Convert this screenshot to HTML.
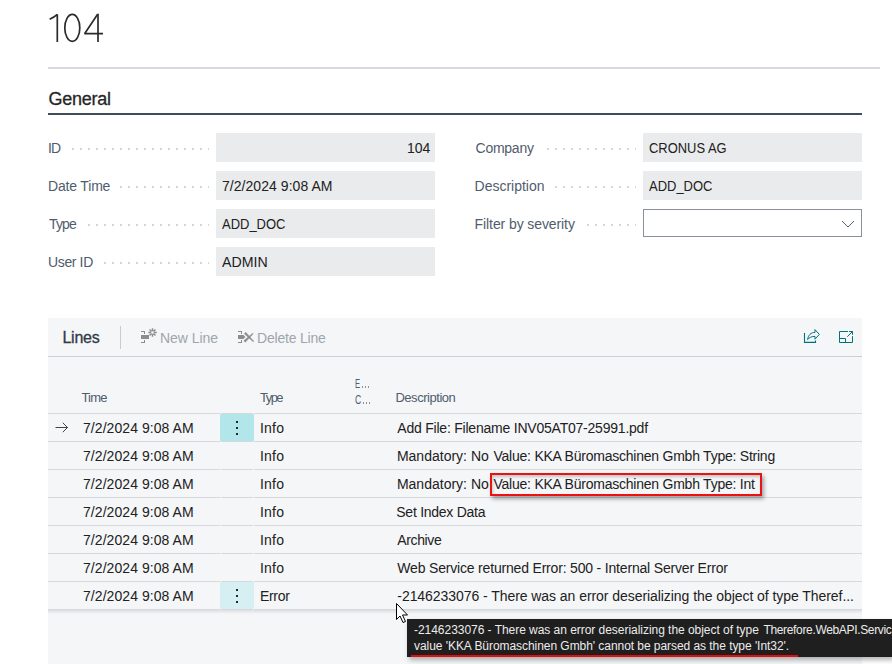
<!DOCTYPE html><html><head><meta charset="utf-8"><style>
html,body{margin:0;padding:0}
body{width:892px;height:664px;overflow:hidden;position:relative;background:#fff;font-family:"Liberation Sans",sans-serif}
.t{position:absolute;white-space:nowrap}
.r{position:absolute}
</style></head><body>
<svg class="r" style="left:0;top:0" width="120" height="60" viewBox="0 0 120 60">
<g fill="none" stroke="#2b2b2b" stroke-width="1.7" stroke-linejoin="miter">
<path d="M57.3 14.2 V42 M57.3 14.4 Q54 17.5 49.6 19.3"/>
<ellipse cx="72.3" cy="27.9" rx="7.5" ry="13.5"/>
<path d="M98 42 V13.8" /><path d="M97.6 14.3 L84.6 33.7 H103" stroke-linejoin="bevel"/>
</g></svg>
<div class="r" style="left:48px;top:67px;width:832px;height:2px;background:#d6d9dd"></div>
<div class="t" style="left:48.60px;top:89.00px;font-size:18px;line-height:20px;color:#262626;font-weight:400;letter-spacing:-0.267px;-webkit-text-stroke:0.3px #262626;">General</div>
<div class="r" style="left:48px;top:113px;width:814px;height:2px;background:#3e4c5e"></div>
<div class="t" style="left:48.00px;top:140.00px;font-size:14px;line-height:16px;color:#505c6d;font-weight:400;letter-spacing:-0.900px;">ID</div>
<div class="r" style="left:72px;top:148px;width:2px;height:2px;background:#d3d6da"></div>
<div class="r" style="left:80px;top:148px;width:2px;height:2px;background:#d3d6da"></div>
<div class="r" style="left:88px;top:148px;width:2px;height:2px;background:#d3d6da"></div>
<div class="r" style="left:96px;top:148px;width:2px;height:2px;background:#d3d6da"></div>
<div class="r" style="left:104px;top:148px;width:2px;height:2px;background:#d3d6da"></div>
<div class="r" style="left:112px;top:148px;width:2px;height:2px;background:#d3d6da"></div>
<div class="r" style="left:120px;top:148px;width:2px;height:2px;background:#d3d6da"></div>
<div class="r" style="left:128px;top:148px;width:2px;height:2px;background:#d3d6da"></div>
<div class="r" style="left:136px;top:148px;width:2px;height:2px;background:#d3d6da"></div>
<div class="r" style="left:144px;top:148px;width:2px;height:2px;background:#d3d6da"></div>
<div class="r" style="left:152px;top:148px;width:2px;height:2px;background:#d3d6da"></div>
<div class="r" style="left:160px;top:148px;width:2px;height:2px;background:#d3d6da"></div>
<div class="r" style="left:168px;top:148px;width:2px;height:2px;background:#d3d6da"></div>
<div class="r" style="left:176px;top:148px;width:2px;height:2px;background:#d3d6da"></div>
<div class="r" style="left:184px;top:148px;width:2px;height:2px;background:#d3d6da"></div>
<div class="r" style="left:192px;top:148px;width:2px;height:2px;background:#d3d6da"></div>
<div class="r" style="left:200px;top:148px;width:2px;height:2px;background:#d3d6da"></div>
<div class="r" style="left:208px;top:148px;width:1px;height:2px;background:#d3d6da"></div>
<div class="r" style="left:216px;top:133px;width:219px;height:29px;background:#eaebed"></div>
<div class="t" style="left:407.10px;top:140.00px;font-size:14px;line-height:16px;color:#212121;font-weight:400;letter-spacing:-0.050px;">104</div>
<div class="t" style="left:48.00px;top:178.00px;font-size:14px;line-height:16px;color:#505c6d;font-weight:400;letter-spacing:-0.175px;">Date Time</div>
<div class="r" style="left:120px;top:186px;width:2px;height:2px;background:#d3d6da"></div>
<div class="r" style="left:128px;top:186px;width:2px;height:2px;background:#d3d6da"></div>
<div class="r" style="left:136px;top:186px;width:2px;height:2px;background:#d3d6da"></div>
<div class="r" style="left:144px;top:186px;width:2px;height:2px;background:#d3d6da"></div>
<div class="r" style="left:152px;top:186px;width:2px;height:2px;background:#d3d6da"></div>
<div class="r" style="left:160px;top:186px;width:2px;height:2px;background:#d3d6da"></div>
<div class="r" style="left:168px;top:186px;width:2px;height:2px;background:#d3d6da"></div>
<div class="r" style="left:176px;top:186px;width:2px;height:2px;background:#d3d6da"></div>
<div class="r" style="left:184px;top:186px;width:2px;height:2px;background:#d3d6da"></div>
<div class="r" style="left:192px;top:186px;width:2px;height:2px;background:#d3d6da"></div>
<div class="r" style="left:200px;top:186px;width:2px;height:2px;background:#d3d6da"></div>
<div class="r" style="left:208px;top:186px;width:1px;height:2px;background:#d3d6da"></div>
<div class="r" style="left:216px;top:171px;width:219px;height:29px;background:#eaebed"></div>
<div class="t" style="left:222.00px;top:178.00px;font-size:14px;line-height:16px;color:#212121;font-weight:400;letter-spacing:0.047px;">7/2/2024 9:08 AM</div>
<div class="t" style="left:49.00px;top:216.00px;font-size:14px;line-height:16px;color:#505c6d;font-weight:400;letter-spacing:-0.833px;">Type</div>
<div class="r" style="left:88px;top:224px;width:2px;height:2px;background:#d3d6da"></div>
<div class="r" style="left:96px;top:224px;width:2px;height:2px;background:#d3d6da"></div>
<div class="r" style="left:104px;top:224px;width:2px;height:2px;background:#d3d6da"></div>
<div class="r" style="left:112px;top:224px;width:2px;height:2px;background:#d3d6da"></div>
<div class="r" style="left:120px;top:224px;width:2px;height:2px;background:#d3d6da"></div>
<div class="r" style="left:128px;top:224px;width:2px;height:2px;background:#d3d6da"></div>
<div class="r" style="left:136px;top:224px;width:2px;height:2px;background:#d3d6da"></div>
<div class="r" style="left:144px;top:224px;width:2px;height:2px;background:#d3d6da"></div>
<div class="r" style="left:152px;top:224px;width:2px;height:2px;background:#d3d6da"></div>
<div class="r" style="left:160px;top:224px;width:2px;height:2px;background:#d3d6da"></div>
<div class="r" style="left:168px;top:224px;width:2px;height:2px;background:#d3d6da"></div>
<div class="r" style="left:176px;top:224px;width:2px;height:2px;background:#d3d6da"></div>
<div class="r" style="left:184px;top:224px;width:2px;height:2px;background:#d3d6da"></div>
<div class="r" style="left:192px;top:224px;width:2px;height:2px;background:#d3d6da"></div>
<div class="r" style="left:200px;top:224px;width:2px;height:2px;background:#d3d6da"></div>
<div class="r" style="left:208px;top:224px;width:1px;height:2px;background:#d3d6da"></div>
<div class="r" style="left:216px;top:209px;width:219px;height:29px;background:#eaebed"></div>
<div class="t" style="left:222.00px;top:216.00px;font-size:14px;line-height:16px;color:#212121;font-weight:400;letter-spacing:0.000px;transform:scaleX(0.9265);transform-origin:0 0;">ADD_DOC</div>
<div class="t" style="left:48.00px;top:254.00px;font-size:14px;line-height:16px;color:#505c6d;font-weight:400;letter-spacing:-0.367px;">User ID</div>
<div class="r" style="left:104px;top:262px;width:2px;height:2px;background:#d3d6da"></div>
<div class="r" style="left:112px;top:262px;width:2px;height:2px;background:#d3d6da"></div>
<div class="r" style="left:120px;top:262px;width:2px;height:2px;background:#d3d6da"></div>
<div class="r" style="left:128px;top:262px;width:2px;height:2px;background:#d3d6da"></div>
<div class="r" style="left:136px;top:262px;width:2px;height:2px;background:#d3d6da"></div>
<div class="r" style="left:144px;top:262px;width:2px;height:2px;background:#d3d6da"></div>
<div class="r" style="left:152px;top:262px;width:2px;height:2px;background:#d3d6da"></div>
<div class="r" style="left:160px;top:262px;width:2px;height:2px;background:#d3d6da"></div>
<div class="r" style="left:168px;top:262px;width:2px;height:2px;background:#d3d6da"></div>
<div class="r" style="left:176px;top:262px;width:2px;height:2px;background:#d3d6da"></div>
<div class="r" style="left:184px;top:262px;width:2px;height:2px;background:#d3d6da"></div>
<div class="r" style="left:192px;top:262px;width:2px;height:2px;background:#d3d6da"></div>
<div class="r" style="left:200px;top:262px;width:2px;height:2px;background:#d3d6da"></div>
<div class="r" style="left:208px;top:262px;width:1px;height:2px;background:#d3d6da"></div>
<div class="r" style="left:216px;top:247px;width:219px;height:29px;background:#eaebed"></div>
<div class="t" style="left:222.00px;top:254.00px;font-size:14px;line-height:16px;color:#212121;font-weight:400;letter-spacing:0.000px;transform:scaleX(1.0114);transform-origin:0 0;">ADMIN</div>
<div class="t" style="left:475.60px;top:140.00px;font-size:14px;line-height:16px;color:#505c6d;font-weight:400;letter-spacing:-0.267px;">Company</div>
<div class="r" style="left:547px;top:148px;width:2px;height:2px;background:#d3d6da"></div>
<div class="r" style="left:555px;top:148px;width:2px;height:2px;background:#d3d6da"></div>
<div class="r" style="left:563px;top:148px;width:2px;height:2px;background:#d3d6da"></div>
<div class="r" style="left:571px;top:148px;width:2px;height:2px;background:#d3d6da"></div>
<div class="r" style="left:579px;top:148px;width:2px;height:2px;background:#d3d6da"></div>
<div class="r" style="left:587px;top:148px;width:2px;height:2px;background:#d3d6da"></div>
<div class="r" style="left:595px;top:148px;width:2px;height:2px;background:#d3d6da"></div>
<div class="r" style="left:603px;top:148px;width:2px;height:2px;background:#d3d6da"></div>
<div class="r" style="left:611px;top:148px;width:2px;height:2px;background:#d3d6da"></div>
<div class="r" style="left:619px;top:148px;width:2px;height:2px;background:#d3d6da"></div>
<div class="r" style="left:627px;top:148px;width:2px;height:2px;background:#d3d6da"></div>
<div class="r" style="left:635px;top:148px;width:1px;height:2px;background:#d3d6da"></div>
<div class="r" style="left:643px;top:133px;width:219px;height:29px;background:#eaebed"></div>
<div class="t" style="left:648.70px;top:140.00px;font-size:14px;line-height:16px;color:#212121;font-weight:400;letter-spacing:0.000px;transform:scaleX(0.9241);transform-origin:0 0;">CRONUS AG</div>
<div class="t" style="left:474.60px;top:178.00px;font-size:14px;line-height:16px;color:#505c6d;font-weight:400;letter-spacing:-0.010px;">Description</div>
<div class="r" style="left:555px;top:186px;width:2px;height:2px;background:#d3d6da"></div>
<div class="r" style="left:563px;top:186px;width:2px;height:2px;background:#d3d6da"></div>
<div class="r" style="left:571px;top:186px;width:2px;height:2px;background:#d3d6da"></div>
<div class="r" style="left:579px;top:186px;width:2px;height:2px;background:#d3d6da"></div>
<div class="r" style="left:587px;top:186px;width:2px;height:2px;background:#d3d6da"></div>
<div class="r" style="left:595px;top:186px;width:2px;height:2px;background:#d3d6da"></div>
<div class="r" style="left:603px;top:186px;width:2px;height:2px;background:#d3d6da"></div>
<div class="r" style="left:611px;top:186px;width:2px;height:2px;background:#d3d6da"></div>
<div class="r" style="left:619px;top:186px;width:2px;height:2px;background:#d3d6da"></div>
<div class="r" style="left:627px;top:186px;width:2px;height:2px;background:#d3d6da"></div>
<div class="r" style="left:635px;top:186px;width:1px;height:2px;background:#d3d6da"></div>
<div class="r" style="left:643px;top:171px;width:219px;height:29px;background:#eaebed"></div>
<div class="t" style="left:648.70px;top:178.00px;font-size:14px;line-height:16px;color:#212121;font-weight:400;letter-spacing:0.000px;transform:scaleX(0.9265);transform-origin:0 0;">ADD_DOC</div>
<div class="t" style="left:474.60px;top:216.00px;font-size:14px;line-height:16px;color:#505c6d;font-weight:400;letter-spacing:-0.094px;">Filter by severity</div>
<div class="r" style="left:587px;top:224px;width:2px;height:2px;background:#d3d6da"></div>
<div class="r" style="left:595px;top:224px;width:2px;height:2px;background:#d3d6da"></div>
<div class="r" style="left:603px;top:224px;width:2px;height:2px;background:#d3d6da"></div>
<div class="r" style="left:611px;top:224px;width:2px;height:2px;background:#d3d6da"></div>
<div class="r" style="left:619px;top:224px;width:2px;height:2px;background:#d3d6da"></div>
<div class="r" style="left:627px;top:224px;width:2px;height:2px;background:#d3d6da"></div>
<div class="r" style="left:635px;top:224px;width:1px;height:2px;background:#d3d6da"></div>
<div class="r" style="left:643px;top:209px;width:219px;height:28px;background:#fff;border:1px solid #8a919b;box-sizing:border-box"></div>
<svg class="r" style="left:840px;top:218px" width="16" height="12"><path d="M2 3 L8 9 L14 3" fill="none" stroke="#4f5a69" stroke-width="0.95"/></svg>
<div class="r" style="left:48px;top:318px;width:814px;height:346px;background:#f5f6f8"></div>
<div class="t" style="left:62.50px;top:329.00px;font-size:16px;line-height:17px;color:#2f3a47;font-weight:400;letter-spacing:-0.275px;-webkit-text-stroke:0.3px #2f3a47;">Lines</div>
<div class="r" style="left:120px;top:326px;width:1px;height:23px;background:#c8cbd0"></div>
<svg class="r" style="left:136px;top:324px" width="30" height="24" viewBox="136 324 30 24">
<g fill="#8c8c8c">
<rect x="141" y="331" width="4" height="1"/><rect x="144" y="331" width="1" height="3"/>
<rect x="141" y="335" width="8" height="4"/>
<rect x="144" y="340" width="1" height="3"/><rect x="141" y="342" width="4" height="1"/>
</g>
<g stroke="#8c8c8c" stroke-width="1" fill="none">
<path stroke-width="1.4" d="M153.80 332.50 L156.70 332.50 M153.42 333.42 L155.47 335.47 M152.50 333.80 L152.50 336.70 M151.58 333.42 L149.53 335.47 M151.20 332.50 L148.30 332.50 M151.58 331.58 L149.53 329.53 M152.50 331.20 L152.50 328.30 M153.42 331.58 L155.47 329.53"/>
</g></svg>
<div class="t" style="left:160.00px;top:330.00px;font-size:14px;line-height:16px;color:#a0a5ac;font-weight:400;letter-spacing:-0.057px;">New Line</div>
<svg class="r" style="left:232px;top:324px" width="30" height="24" viewBox="232 324 30 24">
<g fill="#8c8c8c">
<rect x="238" y="331" width="4" height="1"/><rect x="241" y="331" width="1" height="3"/>
<path d="M238 335 H243.5 L245.3 337 L243.5 339 H238 Z"/>
<rect x="241" y="340" width="1" height="3"/><rect x="238" y="342" width="4" height="1"/>
</g>
<g fill="#8c8c8c" stroke="#8c8c8c" stroke-width="0.4" stroke-linejoin="round">
<path d="M245.78 332.22 L253.78 341.22 L253.22 341.78 L244.22 333.78 Z"/>
<path d="M243.72 340.72 L252.72 333.22 L253.28 333.78 L245.28 342.28 Z"/>
</g></svg>
<div class="t" style="left:257.00px;top:330.00px;font-size:14px;line-height:16px;color:#a0a5ac;font-weight:400;letter-spacing:-0.200px;">Delete Line</div>
<svg class="r" style="left:796px;top:324px" width="66" height="28" viewBox="796 324 66 28">
<g fill="none" stroke="#00737c" stroke-width="1.1">
<path d="M804.5 333 V342.4 H815.5 V340.4"/>
<path stroke-width="1" stroke-linejoin="miter" d="M807.6 339.6 C808.2 335 811 332.4 815 332.4 V329.6 L819.3 334.4 L815 339.2 V336.4 C811.6 336.3 809.2 337.6 807.6 339.6 Z"/>
<path stroke-width="1" d="M848 331.5 H839.5 V342.5 H852.5 V336.2 M839.5 338.5 H845.5 V342.5 M847.3 336.7 L852.5 331.5 M849 331.5 H852.5 V334.8"/>
</g></svg>
<div class="r" style="left:48px;top:356px;width:814px;height:1px;background:#cbced2"></div>
<div class="t" style="left:81.40px;top:390.00px;font-size:13px;line-height:15px;color:#505c6d;font-weight:400;letter-spacing:-0.767px;">Time</div>
<div class="t" style="left:260.10px;top:390.00px;font-size:13px;line-height:15px;color:#505c6d;font-weight:400;letter-spacing:-1.567px;">Type</div>
<div class="t" style="left:355.21px;top:376.00px;font-size:13px;line-height:15px;color:#505c6d;font-weight:400;letter-spacing:0.000px;transform:scaleX(0.5875);transform-origin:0 0;">E</div>
<div class="t" style="left:355.20px;top:392.00px;font-size:13px;line-height:15px;color:#505c6d;font-weight:400;letter-spacing:0.000px;transform:scaleX(0.6667);transform-origin:0 0;">C</div>
<div class="r" style="left:362px;top:386px;width:1px;height:2px;background:#8a939e"></div>
<div class="r" style="left:365px;top:386px;width:1px;height:2px;background:#8a939e"></div>
<div class="r" style="left:368px;top:386px;width:1px;height:2px;background:#8a939e"></div>
<div class="r" style="left:363px;top:402px;width:1px;height:2px;background:#8a939e"></div>
<div class="r" style="left:366px;top:402px;width:1px;height:2px;background:#8a939e"></div>
<div class="r" style="left:369px;top:402px;width:1px;height:2px;background:#8a939e"></div>
<div class="t" style="left:395.40px;top:390.00px;font-size:13px;line-height:15px;color:#505c6d;font-weight:400;letter-spacing:-0.460px;">Description</div>
<div class="r" style="left:48px;top:413px;width:814px;height:1px;background:#d6d8dc"></div>
<div class="r" style="left:220px;top:413px;width:1px;height:1px;background:#f5f6f8"></div>
<div class="r" style="left:253px;top:413px;width:1px;height:1px;background:#f5f6f8"></div>
<div class="r" style="left:48px;top:441px;width:814px;height:1px;background:#d6d8dc"></div>
<div class="r" style="left:220px;top:441px;width:1px;height:1px;background:#f5f6f8"></div>
<div class="r" style="left:253px;top:441px;width:1px;height:1px;background:#f5f6f8"></div>
<div class="r" style="left:48px;top:469px;width:814px;height:1px;background:#d6d8dc"></div>
<div class="r" style="left:220px;top:469px;width:1px;height:1px;background:#f5f6f8"></div>
<div class="r" style="left:253px;top:469px;width:1px;height:1px;background:#f5f6f8"></div>
<div class="r" style="left:48px;top:497px;width:814px;height:1px;background:#d6d8dc"></div>
<div class="r" style="left:220px;top:497px;width:1px;height:1px;background:#f5f6f8"></div>
<div class="r" style="left:253px;top:497px;width:1px;height:1px;background:#f5f6f8"></div>
<div class="r" style="left:48px;top:525px;width:814px;height:1px;background:#d6d8dc"></div>
<div class="r" style="left:220px;top:525px;width:1px;height:1px;background:#f5f6f8"></div>
<div class="r" style="left:253px;top:525px;width:1px;height:1px;background:#f5f6f8"></div>
<div class="r" style="left:48px;top:553px;width:814px;height:1px;background:#d6d8dc"></div>
<div class="r" style="left:220px;top:553px;width:1px;height:1px;background:#f5f6f8"></div>
<div class="r" style="left:253px;top:553px;width:1px;height:1px;background:#f5f6f8"></div>
<div class="r" style="left:48px;top:581px;width:814px;height:1px;background:#d6d8dc"></div>
<div class="r" style="left:220px;top:581px;width:1px;height:1px;background:#f5f6f8"></div>
<div class="r" style="left:253px;top:581px;width:1px;height:1px;background:#f5f6f8"></div>
<div class="r" style="left:48px;top:609px;width:814px;height:1px;background:#d6d8dc"></div>
<div class="r" style="left:220px;top:609px;width:1px;height:1px;background:#f5f6f8"></div>
<div class="r" style="left:253px;top:609px;width:1px;height:1px;background:#f5f6f8"></div>
<div class="r" style="left:220px;top:414px;width:34px;height:27px;background:#b3e6ea"></div>
<div class="r" style="left:236px;top:421px;width:2px;height:2px;background:#262626"></div>
<div class="r" style="left:236px;top:427px;width:2px;height:2px;background:#262626"></div>
<div class="r" style="left:236px;top:433px;width:2px;height:2px;background:#262626"></div>
<div class="t" style="left:83.00px;top:420.00px;font-size:14px;line-height:16px;color:#212121;font-weight:400;letter-spacing:0.060px;">7/2/2024 9:08 AM</div>
<div class="t" style="left:259.90px;top:420.00px;font-size:14px;line-height:16px;color:#212121;font-weight:400;letter-spacing:0.233px;">Info</div>
<div class="t" style="left:397.30px;top:420.00px;font-size:14px;line-height:16px;color:#212121;font-weight:400;letter-spacing:-0.219px;">Add File: Filename INV05AT07-25991.pdf</div>
<div class="t" style="left:83.00px;top:448.00px;font-size:14px;line-height:16px;color:#212121;font-weight:400;letter-spacing:0.060px;">7/2/2024 9:08 AM</div>
<div class="t" style="left:259.90px;top:448.00px;font-size:14px;line-height:16px;color:#212121;font-weight:400;letter-spacing:0.233px;">Info</div>
<div class="t" style="left:396.90px;top:448.00px;font-size:14px;line-height:16px;color:#212121;font-weight:400;letter-spacing:0.008px;">Mandatory: No</div>
<div class="t" style="left:493.50px;top:448.00px;font-size:14px;line-height:16px;color:#212121;font-weight:400;letter-spacing:-0.234px;">Value: KKA Büromaschinen Gmbh Type: String</div>
<div class="t" style="left:83.00px;top:476.00px;font-size:14px;line-height:16px;color:#212121;font-weight:400;letter-spacing:0.060px;">7/2/2024 9:08 AM</div>
<div class="t" style="left:259.90px;top:476.00px;font-size:14px;line-height:16px;color:#212121;font-weight:400;letter-spacing:0.233px;">Info</div>
<div class="t" style="left:396.90px;top:476.00px;font-size:14px;line-height:16px;color:#212121;font-weight:400;letter-spacing:0.008px;">Mandatory: No</div>
<div class="t" style="left:493.50px;top:476.00px;font-size:14px;line-height:16px;color:#212121;font-weight:400;letter-spacing:-0.234px;">Value: KKA Büromaschinen Gmbh Type: Int</div>
<div class="t" style="left:83.00px;top:504.00px;font-size:14px;line-height:16px;color:#212121;font-weight:400;letter-spacing:0.060px;">7/2/2024 9:08 AM</div>
<div class="t" style="left:259.90px;top:504.00px;font-size:14px;line-height:16px;color:#212121;font-weight:400;letter-spacing:0.233px;">Info</div>
<div class="t" style="left:396.30px;top:504.00px;font-size:14px;line-height:16px;color:#212121;font-weight:400;letter-spacing:-0.262px;">Set Index Data</div>
<div class="t" style="left:83.00px;top:532.00px;font-size:14px;line-height:16px;color:#212121;font-weight:400;letter-spacing:0.060px;">7/2/2024 9:08 AM</div>
<div class="t" style="left:259.90px;top:532.00px;font-size:14px;line-height:16px;color:#212121;font-weight:400;letter-spacing:0.233px;">Info</div>
<div class="t" style="left:397.30px;top:532.00px;font-size:14px;line-height:16px;color:#212121;font-weight:400;letter-spacing:-0.383px;">Archive</div>
<div class="t" style="left:83.00px;top:560.00px;font-size:14px;line-height:16px;color:#212121;font-weight:400;letter-spacing:0.060px;">7/2/2024 9:08 AM</div>
<div class="t" style="left:259.90px;top:560.00px;font-size:14px;line-height:16px;color:#212121;font-weight:400;letter-spacing:0.233px;">Info</div>
<div class="t" style="left:397.30px;top:560.00px;font-size:14px;line-height:16px;color:#212121;font-weight:400;letter-spacing:-0.183px;">Web Service returned Error: 500 - Internal Server Error</div>
<div class="r" style="left:220px;top:582px;width:34px;height:27px;background:#d6eff2"></div>
<div class="r" style="left:236px;top:589px;width:2px;height:2px;background:#262626"></div>
<div class="r" style="left:236px;top:595px;width:2px;height:2px;background:#262626"></div>
<div class="r" style="left:236px;top:601px;width:2px;height:2px;background:#262626"></div>
<div class="t" style="left:83.00px;top:588.00px;font-size:14px;line-height:16px;color:#212121;font-weight:400;letter-spacing:0.060px;">7/2/2024 9:08 AM</div>
<div class="t" style="left:259.90px;top:588.00px;font-size:14px;line-height:16px;color:#212121;font-weight:400;letter-spacing:-0.275px;">Error</div>
<div class="t" style="left:397.30px;top:588.00px;font-size:14px;line-height:16px;color:#212121;font-weight:400;letter-spacing:-0.058px;">-2146233076 - There was an error deserializing the object of type Theref...</div>
<svg class="r" style="left:52px;top:418px" width="20" height="18" viewBox="52 418 20 18"><path d="M55.5 427.5 H67.5 M62.8 422.8 L67.5 427.5 L62.8 432.2" fill="none" stroke="#3a3a3a" stroke-width="0.95"/></svg>
<div class="r" style="left:48px;top:610px;width:814px;height:4px;background:linear-gradient(#dcdee2,rgba(245,246,248,0))"></div>
<div class="r" style="left:490px;top:473px;width:272px;height:23px;border:2px solid #ee1111;box-sizing:border-box;box-shadow:2px 3px 4px rgba(0,0,0,0.35), inset 1px 2px 3px rgba(0,0,0,0.2)"></div>
<div class="r" style="left:407px;top:619px;width:485px;height:38px;background:#1f1f1f;box-shadow:2px 3px 5px rgba(0,0,0,0.3)"></div>
<div class="t" style="left:414.00px;top:623.00px;font-size:12px;line-height:14px;color:#ececec;font-weight:400;letter-spacing:-0.039px;">-2146233076 - There was an error deserializing the object of type</div>
<div class="t" style="left:763.40px;top:623.00px;font-size:12px;line-height:14px;color:#ececec;font-weight:400;letter-spacing:-0.336px;">Therefore.WebAPI.Servic</div>
<div class="t" style="left:414.00px;top:639.00px;font-size:12px;line-height:14px;color:#ececec;font-weight:400;letter-spacing:-0.054px;">value &#x27;KKA Büromaschinen Gmbh&#x27; cannot be parsed as the type &#x27;Int32&#x27;.</div>
<div class="r" style="left:411px;top:655px;width:387px;height:2px;background:#e01010"></div>
<svg class="r" style="left:395px;top:602px" width="16" height="22" viewBox="0 0 16 22"><path d="M1.5 1.5 V17.5 L5 14 L8 20.5 L10.5 19.5 L7.5 13 H12.5 Z" fill="#fff" stroke="#000" stroke-width="1" stroke-linejoin="miter"/></svg>
</body></html>
